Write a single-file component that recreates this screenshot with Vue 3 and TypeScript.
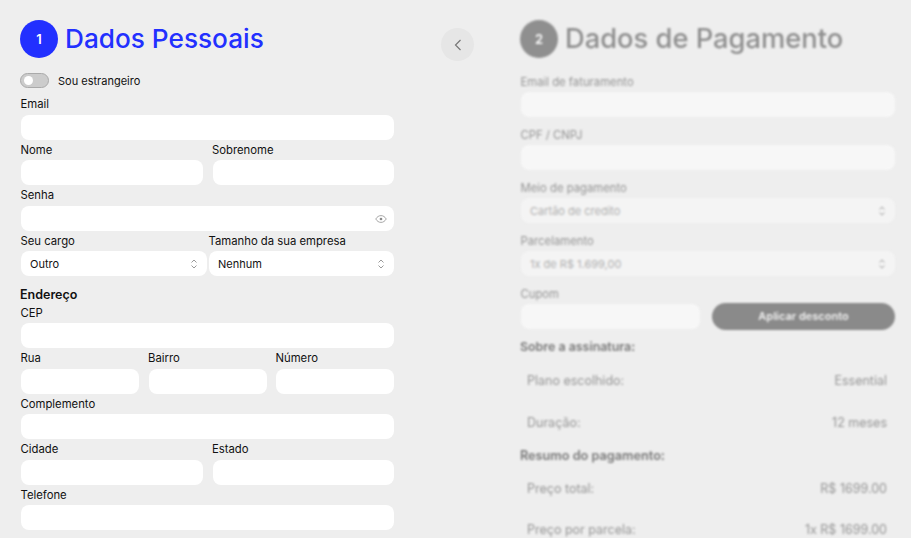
<template>
  <div class="page">
    <section class="col">
      <header class="step">
        <span class="num">1</span>
        <h1>Dados Pessoais</h1>
      </header>
      <div class="foreign">
        <button class="toggle" type="button" aria-label="Sou estrangeiro"><i></i></button>
        <span>Sou estrangeiro</span>
      </div>

      <div class="field">
        <label>Email</label>
        <input type="text" />
      </div>
      <div class="row two">
        <div class="field"><label>Nome</label><input type="text" /></div>
        <div class="field"><label>Sobrenome</label><input type="text" /></div>
      </div>
      <div class="field">
        <label>Senha</label>
        <div class="control">
          <input type="password" />
          <svg class="eye" viewBox="0 0 16 16" fill="none" stroke="#8a8a8a" stroke-width="1">
            <path d="M1 8c1.800-3 4.200-4.500 7-4.500S13.200 5 15 8c-1.800 3-4.200 4.500-7 4.500S2.800 11 1 8z" />
            <circle cx="8" cy="8" r="1.800" fill="#8a8a8a" stroke="none" />
          </svg>
        </div>
      </div>
      <div class="row selects">
        <div class="field">
          <label>Seu cargo</label>
          <div class="control">
            <select><option>Outro</option></select>
            <svg class="updown" viewBox="0 0 8 12" fill="none" stroke="#999" stroke-width="1"><path d="M1.500 4.500L4 2l2.500 2.500M1.500 7.500L4 10l2.500-2.500" /></svg>
          </div>
        </div>
        <div class="field">
          <label>Tamanho da sua empresa</label>
          <div class="control">
            <select><option>Nenhum</option></select>
            <svg class="updown" viewBox="0 0 8 12" fill="none" stroke="#999" stroke-width="1"><path d="M1.500 4.500L4 2l2.500 2.500M1.500 7.500L4 10l2.500-2.500" /></svg>
          </div>
        </div>
      </div>

      <h2 class="address">Endereço</h2>
      <div class="field">
        <label>CEP</label>
        <input type="text" />
      </div>
      <div class="row three">
        <div class="field"><label>Rua</label><input type="text" /></div>
        <div class="field"><label>Bairro</label><input type="text" /></div>
        <div class="field"><label>Número</label><input type="text" /></div>
      </div>
      <div class="field">
        <label>Complemento</label>
        <input type="text" />
      </div>
      <div class="row two">
        <div class="field"><label>Cidade</label><input type="text" /></div>
        <div class="field"><label>Estado</label><input type="text" /></div>
      </div>
      <div class="field">
        <label>Telefone</label>
        <input type="text" />
      </div>
    </section>

    <div class="back-wrap">
      <button class="back" type="button" aria-label="Voltar">
        <svg viewBox="0 0 12 16" fill="none" stroke="#777" stroke-width="1.200"><path d="M8.500 3L3.500 8l5 5" /></svg>
      </button>
    </div>

    <section class="col pay">
      <header class="step">
        <span class="num">2</span>
        <h1>Dados de Pagamento</h1>
      </header>
      <div class="field spaced first"><label>Email de faturamento</label><input type="text" disabled /></div>
      <div class="field spaced"><label>CPF / CNPJ</label><input type="text" disabled /></div>
      <div class="field spaced" v-for="s in paySelects" :key="s.label">
        <label>{{ s.label }}</label>
        <div class="control">
          <select disabled><option>{{ s.value }}</option></select>
          <svg class="updown" viewBox="0 0 8 12" fill="none" stroke="#999" stroke-width="1"><path d="M1.500 4.500L4 2l2.500 2.500M1.500 7.500L4 10l2.500-2.500" /></svg>
        </div>
      </div>
      <div class="coupon">
        <div class="field"><label>Cupom</label><input type="text" disabled /></div>
        <button class="apply" type="button">Aplicar desconto</button>
      </div>

      <h3 class="about">Sobre a assinatura:</h3>
      <div class="line" v-for="l in plan" :key="l[0]"><span>{{ l[0] }}</span><span>{{ l[1] }}</span></div>
      <h3 class="tight">Resumo do pagamento:</h3>
      <div class="line" v-for="l in summary" :key="l[0]"><span>{{ l[0] }}</span><span>{{ l[1] }}</span></div>
    </section>
  </div>
</template>

<script setup lang="ts">
const paySelects = [
  { label: 'Meio de pagamento', value: 'Cartão de credito' },
  { label: 'Parcelamento', value: '1x de R$ 1.699,00' }
]

const plan = [
  ['Plano escolhido:', 'Essential'],
  ['Duração:', '12 meses']
]

const summary = [
  ['Preço total:', 'R$ 1699.00'],
  ['Preço por parcela:', '1x R$ 1699.00']
]
</script>

<style>
html, body {
  margin: 0;
  background: #eeeeee;
  overflow: hidden;
}
</style>

<style scoped>
.page {
  display: flex;
  align-items: flex-start;
  height: 538px;
  overflow: hidden;
  padding: 20px 16px 0 20px;
  box-sizing: border-box;
  background: #eeeeee;
  color: #111;
  font-family: Inter, "Open Sans", sans-serif;
  font-size: 11px;
}
.col {
  width: 374px;
  flex: none;
}
.pay {
  width: 375px;
  margin-left: 46px;
  filter: blur(1.1px);
  color: #959595;
}
.back-wrap {
  width: 80px;
  flex: none;
  padding: 8px 0 0 47px;
  box-sizing: border-box;
}
.back {
  display: flex;
  align-items: center;
  justify-content: center;
  width: 33px;
  height: 33px;
  padding: 0;
  border: 0;
  border-radius: 50%;
  background: #e6e6e6;
}
.back svg {
  width: 12px;
  height: 16px;
}
.step {
  display: flex;
  align-items: center;
  gap: 7px;
  height: 38px;
}
.num {
  display: flex;
  align-items: center;
  justify-content: center;
  width: 38px;
  height: 38px;
  flex: none;
  border-radius: 50%;
  background: #2230ff;
  color: #fff;
  font-size: 13px;
  font-weight: 600;
}
h1 {
  margin: -2px 0 0;
  font-size: 26.200px;
  font-weight: 500;
  color: #2230ff;
  white-space: nowrap;
}
.pay .num {
  background: #8f8f8f;
}
.pay h1 {
  font-size: 27.300px;
  color: #8f8f8f;
}
.foreign {
  display: flex;
  align-items: center;
  gap: 9px;
  height: 15px;
  margin: 15px 0 6.250px;
}
.toggle {
  position: relative;
  width: 29px;
  height: 15px;
  padding: 0;
  border: 1px solid #aaa;
  border-radius: 8px;
  background: #ccc;
}
.toggle i {
  position: absolute;
  left: 3px;
  top: 2px;
  width: 9px;
  height: 9px;
  border-radius: 50%;
  background: #fff;
}
.field {
  display: flex;
  flex-direction: column;
  min-width: 0;
}
label {
  height: 20.500px;
  line-height: 20px;
  white-space: nowrap;
  padding-left: 0.500px;
  font-size: 11.300px;
}
input,
select {
  display: block;
  width: calc(100% - 1px);
  height: 25px;
  margin-left: 1px;
  padding: 0 9px;
  box-sizing: border-box;
  border: 0;
  border-radius: 8px;
  outline: 0;
  background: #fff;
  color: #111;
  font: inherit;
  appearance: none;
}
.control {
  position: relative;
}
.eye {
  position: absolute;
  right: 7px;
  top: 7px;
  width: 12px;
  height: 12px;
}
.updown {
  position: absolute;
  right: 9px;
  top: 7px;
  width: 8px;
  height: 12px;
}
.row {
  display: grid;
  gap: 8.500px;
}
.two {
  grid-template-columns: 183px 1fr;
}
.three {
  grid-template-columns: 119px 119px 1fr;
}
.selects {
  grid-template-columns: 187px 1fr;
  gap: 1px;
}
.address {
  margin: 10px 0 0;
  font-size: 12.500px;
  font-weight: 600;
  line-height: 18px;
  height: 16.500px;
}
.pay .spaced {
  margin-bottom: 7.500px;
}
.pay .first {
  margin-top: 13.800px;
}
.pay input,
.pay select {
  background: #f7f7f7;
  color: #959595;
}
.coupon {
  display: grid;
  grid-template-columns: 180px 1fr;
  gap: 12px;
  align-items: end;
}
.apply {
  height: 27px;
  margin-bottom: -1px;
  padding: 0 0 2px;
  border: 0;
  border-radius: 14px;
  background: #8a8a8a;
  color: #f2f2f2;
  font: inherit;
  font-weight: 600;
}
h3 {
  margin: 9px 0 0;
  font-size: 12.700px;
  font-weight: 600;
  line-height: 18px;
  color: #777;
}
.about {
  margin-bottom: 4px;
  font-size: 12.400px;
}
.tight {
  margin: 4px 0 3px;
}
.line {
  display: flex;
  justify-content: space-between;
  align-items: center;
  height: 41.300px;
  padding: 0 8px 0 7px;
  font-size: 12.500px;
}
</style>
